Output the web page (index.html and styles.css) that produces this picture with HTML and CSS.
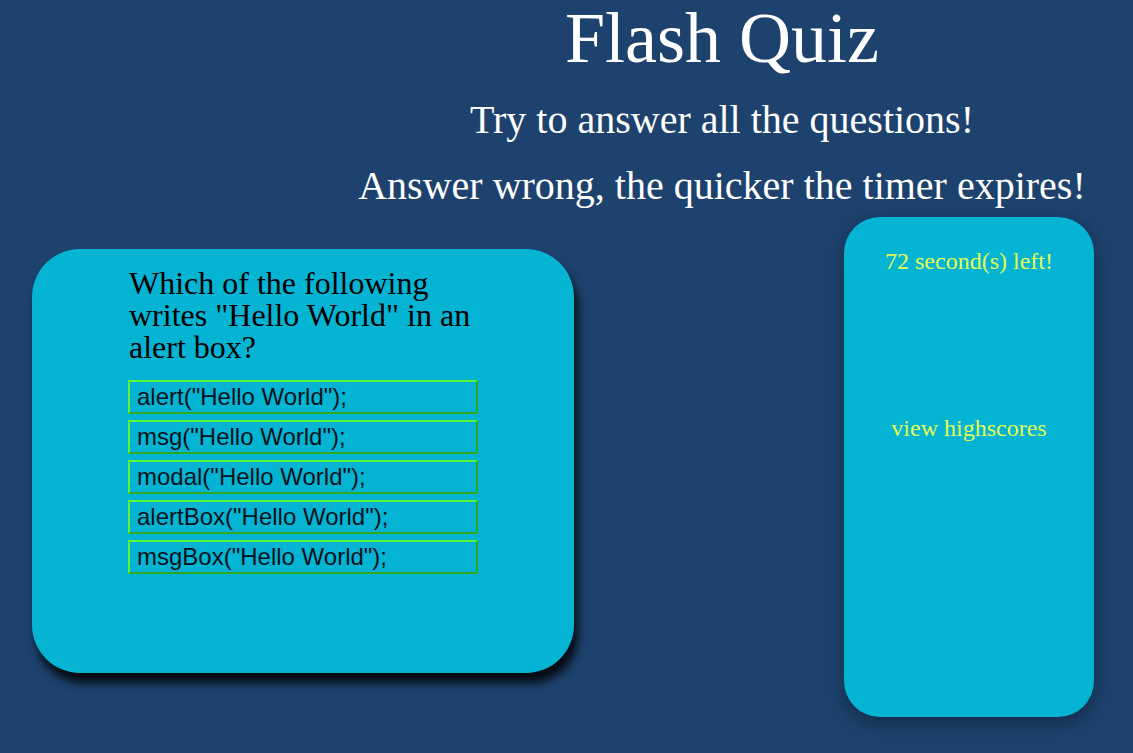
FILE: index.html
```html
<!DOCTYPE html>
<html lang="en">
<head>
<meta charset="utf-8">
<title>Flash Quiz</title>
<link rel="stylesheet" href="styles.css">
</head>
<body>
<header class="header">
  <h1 class="title">Flash Quiz</h1>
  <p class="subtitle">Try to answer all the questions!</p>
  <p class="subtitle subtitle-second">Answer wrong, the quicker the timer expires!</p>
</header>
<main class="main">
  <section class="quiz-card">
    <h2 class="question">Which of the following writes "Hello World" in an alert box?</h2>
    <div class="choices">
      <button class="choice">alert("Hello World");</button>
      <button class="choice">msg("Hello World");</button>
      <button class="choice">modal("Hello World");</button>
      <button class="choice">alertBox("Hello World");</button>
      <button class="choice">msgBox("Hello World");</button>
    </div>
  </section>
  <aside class="side-card">
    <p class="timer">72 second(s) left!</p>
    <a class="highscores">view highscores</a>
  </aside>
</main>
</body>
</html>
```
FILE: styles.css
```css
html, body {
  margin: 0;
  padding: 0;
}
body {
  background: #1d426d;
  font-family: "Liberation Serif", "Times New Roman", serif;
  width: 1133px;
  height: 753px;
  overflow: hidden;
}
.header {
  padding-left: 311px;
  text-align: center;
  color: #ffffff;
}
.title {
  margin: 0;
  padding-top: 2px;
  font-size: 72px;
  font-weight: normal;
  line-height: 72px;
}
.subtitle {
  margin: 0;
  font-size: 40px;
  line-height: 40px;
  padding-top: 26px;
}
.subtitle-second {
  padding-top: 26px;
}
.main {
  display: flex;
  justify-content: space-between;
  align-items: flex-start;
  padding: 11px 39px 0 32px;
}
.quiz-card {
  margin-top: 32px;
  width: 542px;
  height: 424px;
  box-sizing: border-box;
  background: #05b3d3;
  border-radius: 48px;
  box-shadow: 4px 10px 10px rgba(0, 0, 0, 0.85);
  padding: 18px 0 0 97px;
}
.question {
  margin: 0;
  width: 350px;
  font-size: 32px;
  font-weight: normal;
  line-height: 32px;
  color: #000;
}
.choices {
  margin-top: 17px;
  margin-left: -1px;
  display: flex;
  flex-direction: column;
  gap: 6px;
  width: 350px;
}
.choice {
  box-sizing: border-box;
  height: 34px;
  margin: 0;
  padding: 0 0 0 7px;
  background: transparent;
  border: 2px solid;
  border-color: #5cf53a #2ea81c #2ea81c #5cf53a;
  text-align: left;
  font-family: "Liberation Sans", Arial, sans-serif;
  font-size: 24px;
  color: #06121a;
  line-height: 28px;
}
.side-card {
  width: 250px;
  height: 500px;
  background: #05b3d3;
  border-radius: 36px;
  box-shadow: 0 6px 18px rgba(0, 0, 0, 0.35);
  text-align: center;
  color: #e3ff52;
  font-size: 24px;
}
.timer {
  margin: 0;
  padding-top: 30px;
  line-height: 28px;
}
.highscores {
  display: block;
  margin-top: 139px;
  line-height: 28px;
}
```
